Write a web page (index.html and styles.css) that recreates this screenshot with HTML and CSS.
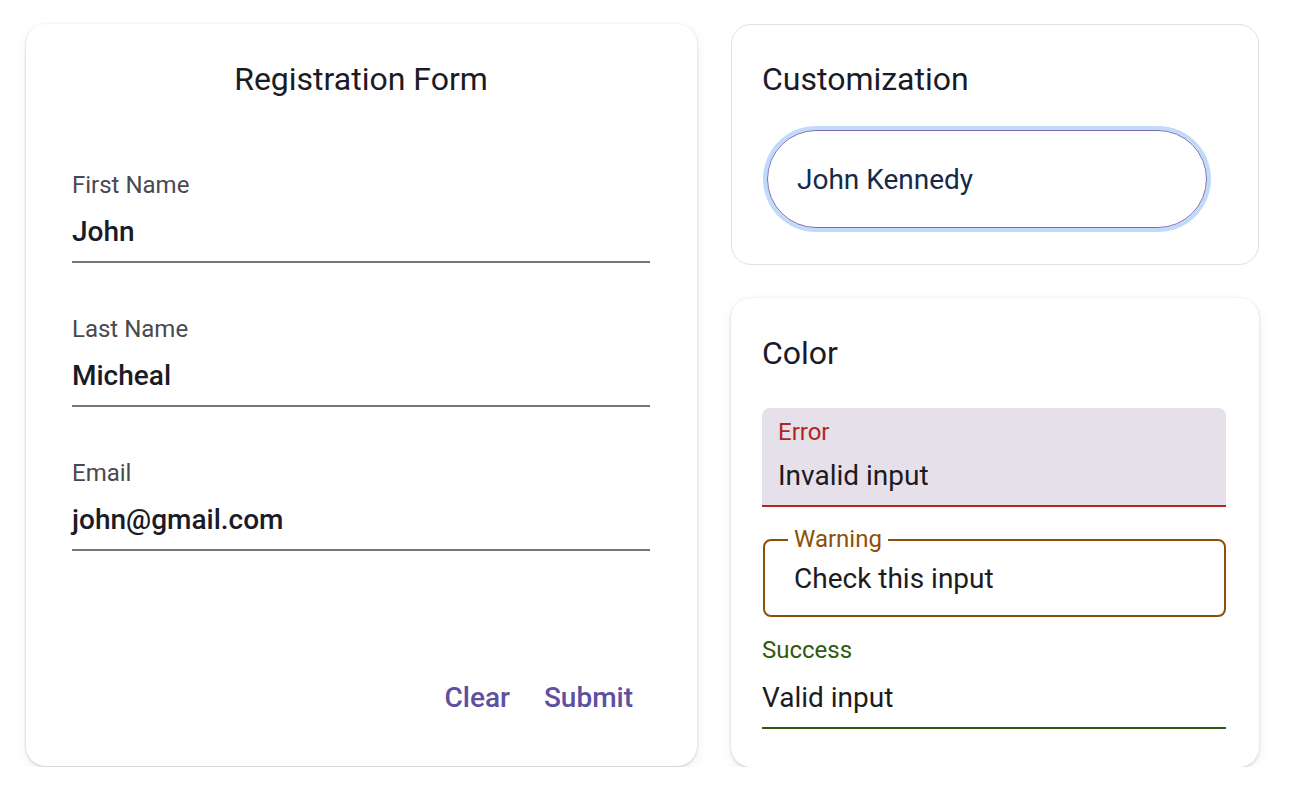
FILE: index.html
```html
<!DOCTYPE html>
<html lang="en">
<head>
    <meta charset="UTF-8">
    <meta name="viewport" content="width=device-width, initial-scale=1.0">
    <title>Text Fields</title>
    <link rel="stylesheet" href="styles.css">
</head>
<body>
    <main class="page">
        <form class="card form-card">
            <h1 class="card-title centered">Registration Form</h1>

            <div class="field">
                <span class="field-label">First Name</span>
                <span class="field-value">John</span>
            </div>
            <div class="field">
                <span class="field-label">Last Name</span>
                <span class="field-value">Micheal</span>
            </div>
            <div class="field">
                <span class="field-label">Email</span>
                <span class="field-value">john@gmail.com</span>
            </div>

            <div class="actions">
                <button type="button" class="text-btn">Clear</button>
                <button type="button" class="text-btn">Submit</button>
            </div>
        </form>

        <div class="side">
            <section class="card outlined-card">
                <h2 class="card-title">Customization</h2>
                <div class="pill-input">John Kennedy</div>
            </section>

            <section class="card color-card">
                <h2 class="card-title">Color</h2>

                <div class="filled error">
                    <span class="state-label">Error</span>
                    <span class="state-value">Invalid input</span>
                </div>

                <div class="outlined warning">
                    <span class="notch-label">Warning</span>
                    <span class="state-value">Check this input</span>
                </div>

                <div class="standard success">
                    <span class="state-label">Success</span>
                    <span class="state-value">Valid input</span>
                </div>
            </section>
        </div>
    </main>
</body>
</html>
```

FILE: styles.css
```css
body, h1, h2, p {
    margin: 0;
    padding: 0;
}

body {
    font-family: Roboto, "Noto Sans", sans-serif;
    background-color: #ffffff;
    color: #1c1b22;
}

.page {
    display: flex;
    gap: 34px;
    padding: 24px 0 0 26px;
}

.card {
    box-sizing: border-box;
    background-color: #ffffff;
    border-radius: 20px;
}

.card-title {
    font-size: 32px;
    font-weight: 400;
    line-height: 40px;
    color: #1a1b26;
}

.card-title.centered {
    text-align: center;
}

/* registration form */
.form-card {
    width: 671px;
    height: 742px;
    padding: 35px 47px 48px 46px;
    display: flex;
    flex-direction: column;
    box-shadow: 0 1px 3px rgba(0, 0, 0, 0.18), 0 4px 14px rgba(0, 0, 0, 0.06);
}

.form-card .card-title {
    margin-bottom: 72px;
}

.field {
    display: flex;
    flex-direction: column;
    gap: 17px;
    padding-bottom: 13px;
    border-bottom: 2px solid #777777;
    margin-bottom: 52px;
}

.field-label {
    font-size: 24px;
    line-height: 28px;
    color: #4a4951;
}

.field-value {
    font-size: 28px;
    font-weight: 500;
    line-height: 32px;
    color: #1a1b26;
}

.actions {
    margin-top: auto;
    display: flex;
    justify-content: flex-end;
    gap: 10px;
    padding-right: 5px;
}

.text-btn {
    font-family: inherit;
    font-size: 28px;
    font-weight: 500;
    line-height: 40px;
    color: #5e4f9f;
    background: none;
    border: none;
    padding: 0 12px;
    cursor: pointer;
}

/* right column */
.side {
    width: 528px;
    display: flex;
    flex-direction: column;
    gap: 33px;
}

.outlined-card {
    height: 241px;
    border: 1px solid #e0e0e0;
    padding: 34px 30px 0 30px;
}

.pill-input {
    margin: 31px 0 0 5px;
    width: 440px;
    height: 98px;
    box-sizing: border-box;
    border: 1.5px solid #7a6bb2;
    border-radius: 49px;
    box-shadow: 0 0 0 4px #c0dbfa;
    padding-left: 29px;
    display: flex;
    align-items: center;
    font-size: 28px;
    color: #152a4a;
}

.color-card {
    height: 469px;
    padding: 35px 33px 0 31px;
    box-shadow: 0 1px 3px rgba(0, 0, 0, 0.18), 0 4px 14px rgba(0, 0, 0, 0.06);
}

.color-card .card-title {
    margin-bottom: 35px;
}

.state-label {
    display: block;
    font-size: 24px;
    line-height: 28px;
}

.state-value {
    display: block;
    font-size: 28px;
    line-height: 32px;
    color: #1c1b22;
}

.filled {
    background-color: #e6e0ea;
    border-radius: 8px 8px 0 0;
    padding: 10px 16px 13px;
    display: flex;
    flex-direction: column;
    gap: 14px;
}

.error {
    border-bottom: 2px solid #b3261e;
}

.error .state-label {
    color: #b3261e;
}

.outlined {
    position: relative;
    margin-top: 32px;
    margin-left: 1px;
    border: 2px solid #8c5107;
    border-radius: 8px;
    padding: 22px 29px 20px;
}

.notch-label {
    position: absolute;
    top: -16px;
    left: 23px;
    padding: 0 6px;
    background-color: #ffffff;
    font-size: 24px;
    line-height: 28px;
    color: #8c5107;
}

.standard {
    margin-top: 19px;
    display: flex;
    flex-direction: column;
    gap: 18px;
    padding-bottom: 13px;
}

.success {
    border-bottom: 2px solid #2f5a10;
}

.success .state-label {
    color: #2f5a10;
}
```
